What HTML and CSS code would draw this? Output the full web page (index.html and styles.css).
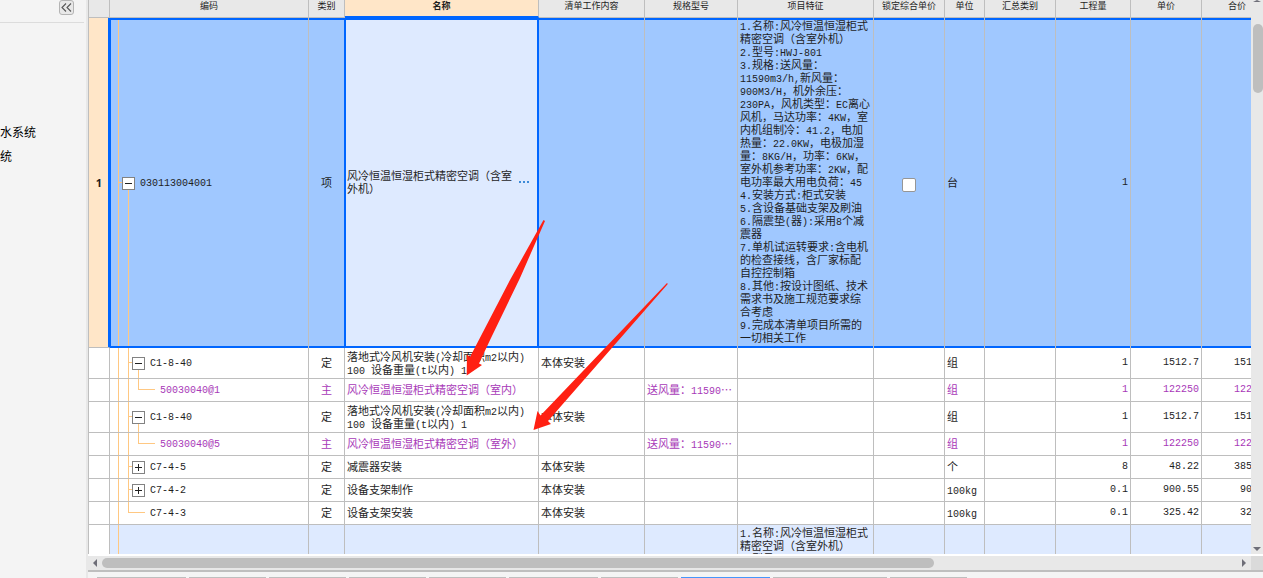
FILE: index.html
```html
<!DOCTYPE html>
<html lang="zh-CN">
<head>
<meta charset="utf-8">
<title>分部分项清单</title>
<link rel="stylesheet" href="styles.css">
</head>
<body>
<div class="app">
  <aside class="sidebar">
    <div class="sidebar-head">
      <button class="collapse" type="button" aria-label="收起">
        <svg width="11" height="9" viewBox="0 0 11 9"><path d="M5 0.5L1 4.5L5 8.5M10 0.5L6 4.5L10 8.5" fill="none" stroke="#555" stroke-width="1.1"/></svg>
      </button>
    </div>
    <ul class="tree">
      <li>水系统</li>
      <li>统</li>
    </ul>
  </aside>
  <main class="main">
    <div class="view">
      <div class="grid-wrap">
        <table class="grid">
          <colgroup>
            <col class="c-num"><col class="c-code"><col class="c-cat"><col class="c-name"><col class="c-work"><col class="c-spec"><col class="c-feat"><col class="c-lock"><col class="c-unit"><col class="c-sum"><col class="c-qty"><col class="c-price"><col class="c-total">
          </colgroup>
          <thead>
            <tr><th></th><th>编码</th><th>类别</th><th class="current">名称</th><th>清单工作内容</th><th>规格型号</th><th>项目特征</th><th>锁定综合单价</th><th>单位</th><th>汇总类别</th><th>工程量</th><th>单价</th><th>合价</th></tr>
          </thead>
          <tbody>
            <tr class="selected">
              <td class="num">1</td>
              <td class="code root"><div class="node"><button class="toggle minus" type="button" aria-label="折叠"></button><span class="l">030113004001</span></div></td>
              <td class="cat">项</td>
              <td class="name"><div class="edit"><span>风冷恒温恒湿柜式精密空调（含室外机）</span><button class="more" type="button" aria-label="更多"><i></i><i></i><i></i></button></div></td>
              <td></td><td></td>
              <td class="feat"><span class="l">1.</span>名称<span class="l">:</span>风冷恒温恒湿柜式<br>精密空调（含室外机）<br><span class="l">2.</span>型号<span class="l">:HWJ-801</span><br><span class="l">3.</span>规格<span class="l">:</span>送风量：<br><span class="l">11590m3/h,</span>新风量：<br><span class="l">900M3/H</span>，机外余压：<br><span class="l">230PA</span>，风机类型：<span class="l">EC</span>离心<br>风机，马达功率：<span class="l">4KW</span>，室<br>内机组制冷：<span class="l">41.2</span>，电加<br>热量：<span class="l">22.0KW</span>，电极加湿<br>量：<span class="l">8KG/H</span>，功率：<span class="l">6KW</span>，<br>室外机参考功率：<span class="l">2KW</span>，配<br>电功率最大用电负荷：<span class="l">45</span><br><span class="l">4.</span>安装方式<span class="l">:</span>柜式安装<br><span class="l">5.</span>含设备基础支架及刷油<br><span class="l">6.</span>隔震垫<span class="l">(</span>器<span class="l">):</span>采用<span class="l">8</span>个减<br>震器<br><span class="l">7.</span>单机试运转要求<span class="l">:</span>含电机<br>的检查接线，含厂家标配<br>自控控制箱<br><span class="l">8.</span>其他<span class="l">:</span>按设计图纸、技术<br>需求书及施工规范要求综<br>合考虑<br><span class="l">9.</span>完成本清单项目所需的<br>一切相关工作</td>
              <td class="lock"><input type="checkbox" aria-label="锁定综合单价"></td>
              <td>台</td><td></td><td class="r">1</td><td class="r"></td><td class="r"></td>
            </tr>
            <tr class="tall">
              <td class="num"></td>
              <td class="code parent"><div class="node"><button class="toggle minus" type="button" aria-label="折叠"></button><span class="l">C1-8-40</span></div></td>
              <td class="cat">定</td>
              <td>落地式冷风机安装<span class="l">(</span>冷却面积<span class="l">m2</span>以内<span class="l">)</span><br><span class="l">100 </span>设备重量<span class="l">(t</span>以内<span class="l">) 1</span></td>
              <td>本体安装</td><td></td><td></td><td></td><td>组</td><td></td><td class="r">1</td><td class="r">1512.7</td><td class="r">1512.7</td>
            </tr>
            <tr class="main-mat">
              <td class="num"></td>
              <td class="code leaf"><div class="node"><span class="l">50030040@1</span></div></td>
              <td class="cat">主</td>
              <td>风冷恒温恒湿柜式精密空调（室内）</td>
              <td></td><td>送风量：<span class="l">11590</span>…</td><td></td><td></td><td>组</td><td></td><td class="r">1</td><td class="r">122250</td><td class="r">122250</td>
            </tr>
            <tr class="tall">
              <td class="num"></td>
              <td class="code parent"><div class="node"><button class="toggle minus" type="button" aria-label="折叠"></button><span class="l">C1-8-40</span></div></td>
              <td class="cat">定</td>
              <td>落地式冷风机安装<span class="l">(</span>冷却面积<span class="l">m2</span>以内<span class="l">)</span><br><span class="l">100 </span>设备重量<span class="l">(t</span>以内<span class="l">) 1</span></td>
              <td>本体安装</td><td></td><td></td><td></td><td>组</td><td></td><td class="r">1</td><td class="r">1512.7</td><td class="r">1512.7</td>
            </tr>
            <tr class="main-mat">
              <td class="num"></td>
              <td class="code leaf"><div class="node"><span class="l">50030040@5</span></div></td>
              <td class="cat">主</td>
              <td>风冷恒温恒湿柜式精密空调（室外）</td>
              <td></td><td>送风量：<span class="l">11590</span>…</td><td></td><td></td><td>组</td><td></td><td class="r">1</td><td class="r">122250</td><td class="r">122250</td>
            </tr>
            <tr>
              <td class="num"></td>
              <td class="code item"><div class="node"><button class="toggle plus" type="button" aria-label="展开"></button><span class="l">C7-4-5</span></div></td>
              <td class="cat">定</td><td>减震器安装</td>
              <td>本体安装</td><td></td><td></td><td></td><td>个</td><td></td><td class="r">8</td><td class="r">48.22</td><td class="r">385.76</td>
            </tr>
            <tr>
              <td class="num"></td>
              <td class="code item"><div class="node"><button class="toggle plus" type="button" aria-label="展开"></button><span class="l">C7-4-2</span></div></td>
              <td class="cat">定</td><td>设备支架制作</td>
              <td>本体安装</td><td></td><td></td><td></td><td><span class="l">100kg</span></td><td></td><td class="r">0.1</td><td class="r">900.55</td><td class="r">90.06</td>
            </tr>
            <tr>
              <td class="num"></td>
              <td class="code last"><div class="node"><span class="l">C7-4-3</span></div></td>
              <td class="cat">定</td><td>设备支架安装</td>
              <td>本体安装</td><td></td><td></td><td></td><td><span class="l">100kg</span></td><td></td><td class="r">0.1</td><td class="r">325.42</td><td class="r">32.54</td>
            </tr>
            <tr class="group">
              <td class="num"></td><td class="code trunk"></td><td></td><td></td><td></td><td></td>
              <td class="feat"><span class="l">1.</span>名称<span class="l">:</span>风冷恒温恒湿柜式<br>精密空调（含室外机）<br><span class="l">2.</span>型号</td>
              <td></td><td></td><td></td><td></td><td></td><td></td>
            </tr>
          </tbody>
        </table>
      </div>
      <div class="vscroll"><i class="tri up"></i><i class="vthumb"></i><i class="tri down"></i></div>
    </div>
    <div class="hscroll"><i class="tri left"></i><div class="track"><i class="hthumb"></i></div><i class="tri right"></i><i class="corner"></i></div>
    <div class="tabs"><i class="t90"></i><i class="t78"></i><i class="t78"></i><i class="t78"></i><i class="t78"></i><i class="t90"></i><i class="t78"></i><i class="t90 active"></i><i class="t114"></i><i class="t78"></i></div>
  </main>
</div>
<svg class="marks" width="220" height="220" viewBox="460 215 220 220">
  <path fill="#ff2012" d="M543.5 220L545 221L520 278L491 338L479 363.5L482 365L466.700 375.5L467 354.5L470 357L510 280Z"/>
  <path fill="#ff2012" d="M667 283L667.800 284L548 421L551 424L533.5 430L537.5 411L540.5 415.5Z"/>
</svg>
</body>
</html>
```
FILE: styles.css
```css
* { box-sizing: border-box; }
body {
  margin: 0;
  background: #f4f4f4;
  color: #1e1e1e;
  font: 11px/13px "Noto Sans CJK SC", sans-serif;
}
button { padding: 0; font: inherit; }
i { display: block; }
.app { display: flex; height: 100vh; overflow: hidden; }

.sidebar { flex: 0 0 88px; border-right: 2px solid #e8e8e8; color: #000; }
.sidebar-head {
  display: flex;
  justify-content: flex-end;
  height: 23px;
  margin-right: 2px;
  padding-right: 10px;
  border-bottom: 1px solid #dcdcdc;
}
.collapse {
  display: grid;
  place-items: center;
  width: 15px;
  height: 15px;
  background: #e8e8e8;
  border: 1px solid #b4b4b4;
  border-radius: 3px;
}
.tree { margin: 0; padding: 97px 0 0; list-style: none; font-size: 12px; line-height: 24px; }

.main { flex: 1; min-width: 0; display: flex; flex-direction: column; }
.view { flex: 1; min-height: 0; display: flex; border-bottom: 2px solid #fff; }
.grid-wrap { flex: 1; min-width: 0; overflow: hidden; background: #fff; border-left: 1px solid #bebebe; }
.grid { width: 1184px; table-layout: fixed; border-collapse: separate; border-spacing: 0; }
.c-num { width: 21px; }
.c-code { width: 199px; }
.c-cat { width: 36px; }
.c-name { width: 194px; }
.c-work { width: 106px; }
.c-spec { width: 93px; }
.c-lock, .c-sum, .c-price, .c-total { width: 71px; }
.c-feat { width: 136px; }
.c-unit { width: 40px; }
.c-qty { width: 75px; }
th {
  height: 18px;
  padding: 0;
  background: #e8e8e8;
  border-right: 1px solid #bebebe;
  border-bottom: 1px solid #bebebe;
  font-size: 9px;
  font-weight: 400;
  line-height: 11px;
  vertical-align: top;
  white-space: nowrap;
}
th.current { background: #ffe6c8; border-bottom: 2px solid #0066ff; font-weight: 700; }
td {
  height: 23px;
  padding: 0 2px 1px;
  border-right: 1px solid #bebebe;
  border-bottom: 1px solid #bebebe;
  vertical-align: middle;
  white-space: nowrap;
}
.l, .r { font-family: "Liberation Mono", monospace; font-size: 10px; white-space: pre; }
.l { line-height: 1px; }
.r { text-align: right; }
.cat { padding: 0 0 1px; text-align: center; }
.num { padding: 0; text-align: center; font: bold 11px/13px "Noto Sans", sans-serif; }
.tall td { height: 31px; }
.main-mat { color: #a839b8; }

.selected td {
  height: 330px;
  background-color: #a0c8ff;
  border-bottom: 0;
  box-shadow: inset 0 2px #0066ff, inset 0 -2px #0066ff;
}
.selected .num {
  background: #ffe6c8;
  border-right: 1px solid #0066ff;
  border-bottom: 1px solid #bebebe;
  box-shadow: inset -1px 0 #0066ff;
}
.selected .code { box-shadow: inset 1px 0 #0066ff, inset 0 2px #0066ff, inset 0 -2px #0066ff; }
.selected .cat { border-right-color: #0066ff; }
.selected .name {
  background: #deeaff;
  border-right-color: #0066ff;
  box-shadow: inset 1px 0 #0066ff, inset -1px 0 #0066ff, inset 0 2px #0066ff, inset 0 -2px #0066ff;
}
.selected .feat { padding-bottom: 3px; }
.edit { display: flex; align-items: center; padding-bottom: 2px; }
.edit span { flex: 1; white-space: normal; }
.more { display: flex; justify-content: center; gap: 2px; width: 24px; background: none; border: 0; }
.more i { width: 2px; height: 2px; background: #3d8bd8; }
.lock { padding: 2px 0 0; text-align: center; }
.lock input {
  appearance: none;
  width: 14px;
  height: 14px;
  margin: 0;
  background: #fff;
  border: 1px solid #969696;
  border-radius: 2px;
  vertical-align: middle;
}
.group td { height: 60px; background-color: #deeaff; vertical-align: top; padding-top: 1px; }
.group .num { background: #fff; }

/* Tree guide lines are painted behind the cell content */
.code { padding: 0; background-repeat: no-repeat; --g: linear-gradient(#ffc882, #ffc882); }
.root {
  background-image: var(--g), var(--g), var(--g);
  background-position: 8px 0, 18px 164px, 8px 164px;
  background-size: 1px 100%, 1px 164px, 10px 1px;
}
.parent {
  background-image: var(--g), var(--g), var(--g), var(--g);
  background-position: 8px 0, 18px 0, 18px 14px, 28px 14px;
  background-size: 1px 100%, 1px 100%, 10px 1px, 1px 100%;
}
.leaf {
  background-image: var(--g), var(--g), var(--g), var(--g);
  background-position: 8px 0, 18px 0, 28px 0, 28px 10px;
  background-size: 1px 100%, 1px 100%, 1px 10px, 17px 1px;
}
.item {
  background-image: var(--g), var(--g), var(--g);
  background-position: 8px 0, 18px 0, 18px 10px;
  background-size: 1px 100%, 1px 100%, 10px 1px;
}
.last {
  background-image: var(--g), var(--g), var(--g);
  background-position: 8px 0, 18px 0, 18px 10px;
  background-size: 1px 100%, 1px 10px, 17px 1px;
}
.trunk { background-image: var(--g); background-position: 8px 0; background-size: 1px 100%; }
.node { display: flex; align-items: center; gap: 5px; padding-left: 22px; }
.root .node { padding-left: 12px; }
.leaf .node { padding-left: 50px; }
.last .node { padding-left: 40px; }
.toggle {
  width: 13px;
  height: 13px;
  border: 1px solid #828282;
  background: linear-gradient(#222, #222) center / 7px 1px no-repeat, #fff;
}
.plus {
  background: linear-gradient(#222, #222) center / 7px 1px no-repeat, linear-gradient(#222, #222) center / 1px 7px no-repeat, #fff;
}

.vscroll { flex: 0 0 12px; display: flex; flex-direction: column; align-items: center; background: #e8e8e8; padding-bottom: 3px; }
.vthumb { width: 10px; height: 69px; margin: 22px 0 auto; border-radius: 5px; background: #bebebe; align-self: flex-end; }
.tri { width: 0; height: 0; border: 4px solid transparent; }
.up { border-width: 0 4px 2px; border-bottom-color: #6e6e78; }
.down { border-width: 4px 4px 0; border-top-color: #6e6e78; }
.left { border-width: 4px 4px 4px 0; border-right-color: #6e6e78; }
.right { border-width: 4px 0 4px 4px; border-left-color: #6e6e78; }
.hscroll { display: flex; align-items: center; height: 16px; padding-left: 5px; background: #e8e8e8; border-bottom: 2px solid #bebebe; }
.track { flex: 1; margin: 0 5px; }
.hthumb { width: 73.3%; height: 10px; border-radius: 5px; background: #bebebe; }
.corner { width: 12px; height: 14px; margin-left: 5px; background: #dadada; }
.tabs { display: flex; gap: 3px; height: 6px; padding: 5px 9px 0; }
.tabs i { background: #bebebe; }
.t78 { width: 77px; }
.t90 { width: 89px; }
.t114 { width: 114px; }
.tabs .active { background: #4696fa; }
.marks { position: absolute; left: 460px; top: 215px; pointer-events: none; }
```
